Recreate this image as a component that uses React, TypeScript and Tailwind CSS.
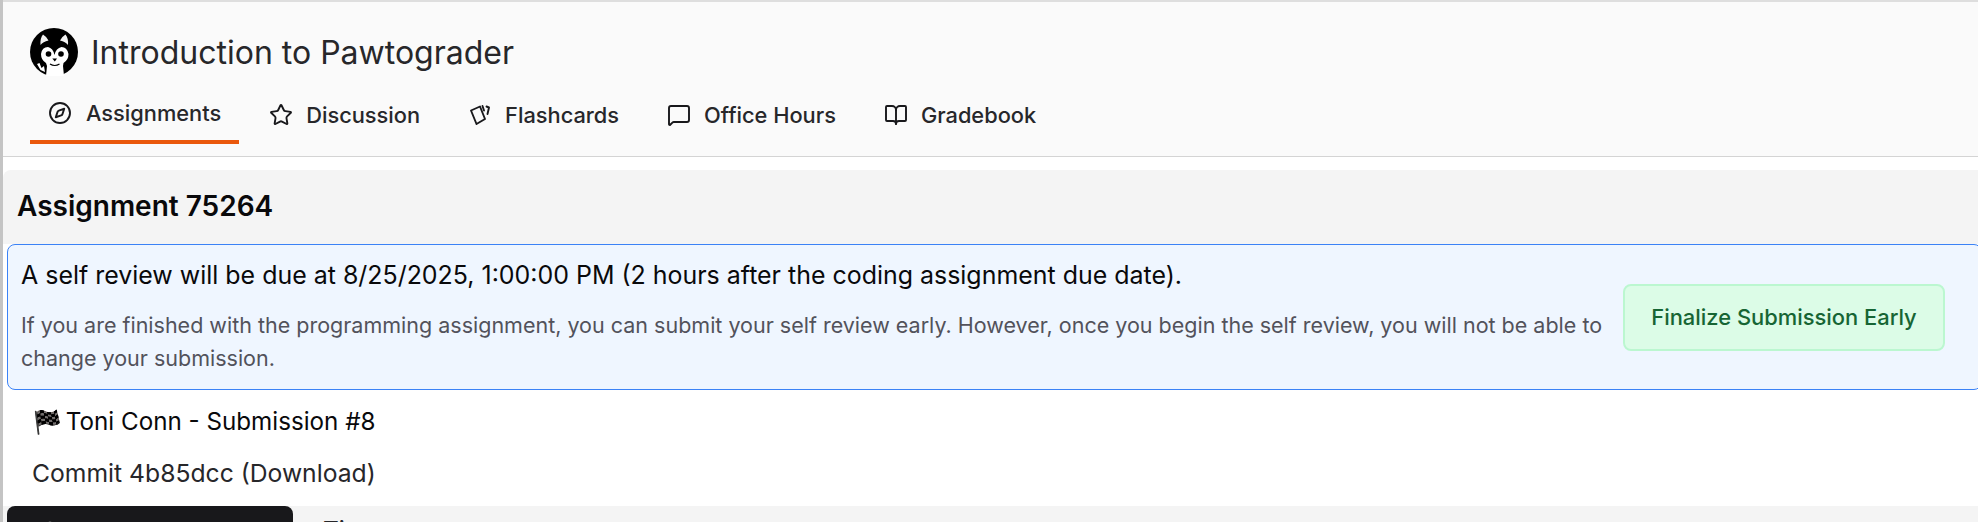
import React from 'react';
import {BookOpen, Circle, Compass, MessageSquare, Star} from 'lucide-react';

function HuskyLogo() {
    return (
        <svg viewBox="5 3 48 50" className="w-[48px] h-[50px] shrink-0">
            <circle cx="29" cy="27" r="24" fill="#000" />
            <path d="M15.5 20 Q15 13 18 9.5 Q22 12 23.5 15.5 Q18 16.5 15.5 20Z" fill="#f2f2f2" />
            <path d="M43 20 Q43.5 13 40.5 9.5 Q36.5 12 35 15.5 Q40.5 16.5 43 20Z" fill="#f2f2f2" />
            <path d="M29.5 30 Q28 23 23 22 Q17 22 16 29 Q16 35 21 38 L22 41 L21 51 L39 51 L38 41 L38.5 38 Q43.5 35 43.5 29 Q42 22 36.5 22 Q31 23 29.5 30Z" fill="#fff" />
            <circle cx="23.5" cy="29" r="2.8" fill="#000" />
            <circle cx="36" cy="29" r="2.8" fill="#000" />
            <path d="M27.3 33.5 h4.8 l-2.3 3z" fill="#000" />
            <path d="M25 39 Q29.7 42 34.5 39" stroke="#000" strokeWidth="1.2" fill="none" />
            <path d="M12 39 L14.5 38 L16.5 43 L19 41 L20 47 L15.5 45Z" fill="#fff" />
        </svg>
    );
}

function CardsIcon({className}: {className?: string}) {
    return (
        <svg viewBox="0 0 24 24" fill="none" stroke="currentColor" strokeWidth="1.9" strokeLinecap="round" strokeLinejoin="round" className={className}>
            <path d="M3 7.5 L12 3.5 L17 16 L8.5 21Z" />
            <path d="M14.5 3 L16 7.5" />
            <path d="M18.5 3.5 L21 4.5 L19.5 11" />
        </svg>
    );
}

const tabs = [
    {label: 'Assignments', icon: Compass, active: true},
    {label: 'Discussion', icon: Star},
    {label: 'Flashcards', icon: CardsIcon},
    {label: 'Office Hours', icon: MessageSquare},
    {label: 'Gradebook', icon: BookOpen},
];

export default function App() {
    return (
        <div className="w-[1978px] h-[522px] overflow-hidden bg-white flex font-['Inter',sans-serif] text-[#18181b]">
            <div className="w-[3px] shrink-0 bg-[#c4c4c4]" />
            <div className="flex-1 min-w-0 flex flex-col">
                <div className="h-[2px] shrink-0 bg-[#dedede]" />
                <header className="h-[155px] shrink-0 bg-[#fafafa] border-b border-[#d4d4d4] pl-[27px]">
                    <div className="flex items-center gap-[13px] pt-[25px] h-[76px]">
                        <HuskyLogo />
                        <h1 className="text-[32px] leading-[36px] text-[#27272a]">Introduction to Pawtograder</h1>
                    </div>
                    <nav className="flex items-start gap-[12px] mt-[18px]">
                        {tabs.map(tab => (
                            <div
                                key={tab.label}
                                className={
                                    tab.active
                                        ? 'flex items-center gap-[14px] h-[48px] px-[18px] pb-[11px] border-b-4 border-[#ea580c]'
                                        : 'flex items-center gap-[13px] h-[48px] px-[18px] pb-[10px]'
                                }
                            >
                                <tab.icon className="w-[24px] h-[24px]" strokeWidth={1.9} />
                                <span className="text-[21.8px] leading-[26px] font-medium text-[#27272a]">{tab.label}</span>
                            </div>
                        ))}
                    </nav>
                </header>
                <main className="flex-1 min-h-0 mt-[13px] flex flex-col">
                    <div className="bg-[#f4f4f4] rounded-tl-lg pl-[14px] pt-[18px] h-[74px] shrink-0">
                        <h2 className="text-[28px] leading-[36px] font-semibold text-[#09090b]">Assignment 75264</h2>
                    </div>
                    <section className="ml-[4px] -mr-[4px] h-[146px] shrink-0 bg-[#eff6ff] border border-[#3b82f6] rounded-lg flex items-center pl-[13px] pr-[36px]">
                        <div className="flex-1 min-w-0">
                            <p className="text-[24.95px] leading-[32px] text-[#09090b]">
                                A self review will be due at 8/25/2025, 1:00:00 PM (2 hours after the coding assignment due date).
                            </p>
                            <p className="text-[21.5px] leading-[33px] text-[#52525b] mt-[18px]">
                                If you are finished with the programming assignment, you can submit your self review early. However, once you begin the self review, you will not be able to change your submission.
                            </p>
                        </div>
                        <button className="w-[322px] h-[67px] ml-[16px] shrink-0 rounded-lg bg-[#dcfce7] border-2 border-[#bbf7d0] text-[21.9px] font-medium text-[#166534]">
                            Finalize Submission Early
                        </button>
                    </section>
                    <div className="pl-[30px] pt-[16px] h-[52px] shrink-0 text-[24.2px] leading-[32px] text-[#09090b]">
                        <span className="inline-block mr-[-3px] text-[23px] brightness-50 contrast-200">🏁</span> Toni Conn - Submission #8
                    </div>
                    <div className="pl-[29px] h-[64px] shrink-0 pt-[15px] text-[24.7px] leading-[32px] text-[#27272a]">Commit 4b85dcc (Download)</div>
                    <div className="flex-1 bg-[#f4f4f4] flex pl-[4px]">
                        <div className="w-[286px] h-[60px] bg-[#18181b] rounded-t-lg shrink-0 pl-[33px] pt-[15px] text-white">
                            <Circle className="w-[20px] h-[20px]" />
                        </div>
                        <span className="ml-[30px] text-[24.5px] leading-[32px] pt-[8px] text-[#27272a]">Time</span>
                    </div>
                </main>
            </div>
        </div>
    );
}
